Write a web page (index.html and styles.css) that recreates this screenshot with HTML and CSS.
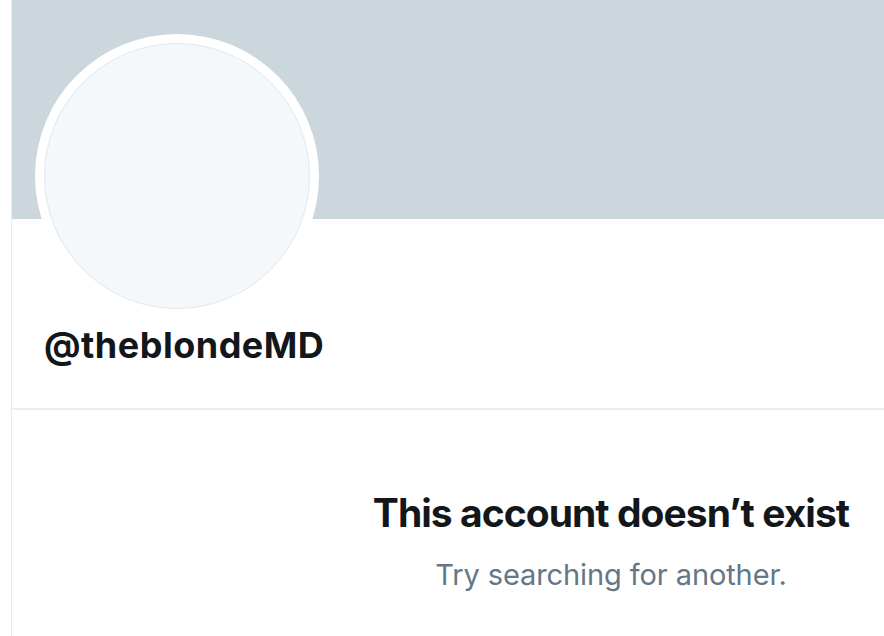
FILE: index.html
```html
<!DOCTYPE html>
<html lang="en">
<head>
<meta charset="utf-8">
<title>@theblondeMD</title>
<link rel="stylesheet" href="styles.css">
</head>
<body>
<main class="column">
  <div class="banner"></div>
  <section class="profile">
    <div class="avatar"><div class="avatar-inner"></div></div>
    <h1 class="handle">@theblondeMD</h1>
  </section>
  <section class="empty">
    <h2 class="empty-title">This account doesn’t exist</h2>
    <p class="empty-sub">Try searching for another.</p>
  </section>
</main>
</body>
</html>
```
FILE: styles.css
```css
html, body {
  margin: 0;
  padding: 0;
  background: #ffffff;
  overflow: hidden;
}
body {
  font-family: Inter, "Liberation Sans", sans-serif;
  height: 636px;
}
.column {
  margin-left: 11px;
  border-left: 1px solid #e6ecf0;
  min-height: 636px;
}
.banner {
  height: 219px;
  background: #ccd6dd;
}
.profile {
  display: flex;
  flex-direction: column;
  align-items: flex-start;
  padding: 0 0 0 23px;
  border-bottom: 2px solid #e9edf0;
  height: 189px;
}
.avatar {
  width: 284px;
  height: 284px;
  flex: none;
  margin-top: -185px;
  box-sizing: border-box;
  padding: 9px;
  border-radius: 50%;
  background: #ffffff;
}
.avatar-inner {
  width: 100%;
  height: 100%;
  box-sizing: border-box;
  border-radius: 50%;
  background: #f5f8fa;
  border: 1px solid #e1e8ed;
}
.handle {
  margin: 5px 0 0 9px;
  font-size: 36px;
  line-height: 44px;
  font-weight: 700;
  color: #14171a;
  letter-spacing: 0.5px;
}
.empty {
  text-align: center;
  padding: 79px 0 0 326px;
}
.empty-title {
  margin: 0;
  font-size: 39px;
  line-height: 48px;
  font-weight: 700;
  color: #14171a;
  letter-spacing: -0.95px;
}
.empty-sub {
  margin: 20px 0 0;
  font-size: 29px;
  line-height: 36px;
  color: #657786;
  letter-spacing: -0.1px;
}
```
